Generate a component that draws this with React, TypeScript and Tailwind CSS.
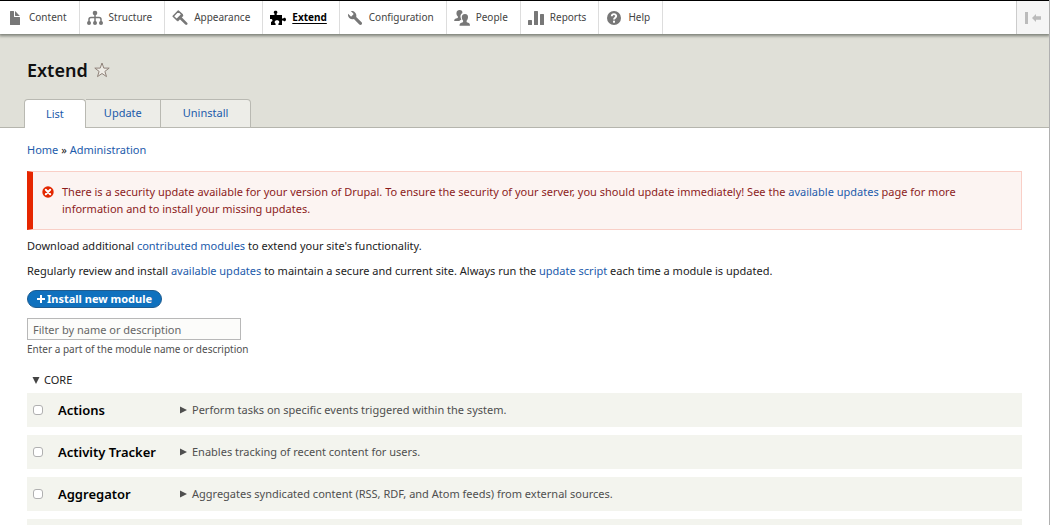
import React, { useState } from 'react';
import clsx from 'clsx';

type IconProps = { children: React.ReactNode };

const Glyph: React.FC<IconProps> = ({ children }) => (
  <svg viewBox="0 0 16 16" className="h-4 w-4 shrink-0" fill="currentColor" aria-hidden="true">
    {children}
  </svg>
);

const ContentIcon = () => (
  <Glyph>
    <path d="M12.5 7h-5a.5.5 0 0 1-.5-.5v-5a.5.5 0 0 0-.5-.5h-3a.5.5 0 0 0-.5.5v13a.5.5 0 0 0 .5.5h9a.5.5 0 0 0 .5-.5v-7a.5.5 0 0 0-.5-.5zM8.5 6h4c.3 0 .35-.15.15-.35l-4.3-4.3C8.15 1.15 8 1.2 8 1.5v4c0 .3.2.5.5.5z" />
  </Glyph>
);

const StructureIcon = () => (
  <Glyph>
    <circle cx="8" cy="3" r="2.3" />
    <path d="M8 4.500V13M2 12.500V9.500Q2 7.500 4 7.500h8q2 0 2 2v3" fill="none" stroke="currentColor" strokeWidth="1.500" />
    <circle cx="2" cy="13" r="2" />
    <circle cx="8" cy="13" r="2" />
    <circle cx="14" cy="13" r="2" />
  </Glyph>
);

const AppearanceIcon = () => (
  <Glyph>
    <path d="M6.300 1 1.200 6.200l3.600 3.600 5.400-5.200z" fill="none" stroke="currentColor" strokeWidth="1.500" strokeLinejoin="round" />
    <path d="M9.500 3.800 11.500 5.800 5.900 11.400 3.900 9.400z" />
    <path d="M9 8.500l5.200 5.200" stroke="currentColor" strokeWidth="2.600" strokeLinecap="round" />
  </Glyph>
);

const ExtendIcon = () => (
  <Glyph>
    <path d="M0 5h4.500V3.500C3.400 3 3.500 .7 5.600 .7s2.200 2.300 1.100 2.800V5H12v3.500h1.200c.4-1.200 2.800-1.200 2.800 1s-2.400 2.200-2.800 1H12V15H8.400v-1.500c1.500-.7 1.200-3.300-1.400-3.300s-2.900 2.600-1.400 3.300V15H1v-3.200c1.700.2 2.200-2.800 0-2.800H0z" />
  </Glyph>
);

const ConfigurationIcon = () => (
  <Glyph>
    <path d="M14.600 12.300 9.200 7.100c.5-1.600.1-3.400-1.200-4.700C6.900 1.200 5.200.8 3.800 1.100l2.500 2.500c.3.300.3.700 0 1L4.600 6.300c-.3.300-.7.300-1 0L1.100 3.800C.8 5.300 1.200 6.900 2.300 8c1.300 1.200 3 1.600 4.600 1.100l5.400 5.500c.6.600 1.600.6 2.300 0 .600-.7.600-1.700 0-2.300z" />
  </Glyph>
);

const PeopleIcon = () => (
  <Glyph>
    <path d="M5.500 0C7.700 0 8.600 1.200 8.400 3c-1.500.8-2.100 2.300-1.900 4 .1 1 .4 1.800.9 2.500-.8.400-1.700.9-2.200 1.500H.2c-.2-1.700.8-2.500 3.500-3 .4-.6.300-1.200 0-1.700-1.100-.9-1.400-2.300-1.200-3.500C2.700 1 3.700 0 5.500 0z" />
    <path d="M11 4c2.200 0 3.200 1.300 3 3.400-.1 1.300-.5 2.400-1.300 3.200-.2.600-.2 1.200.1 1.700 2.200.4 3.200 1.400 3.200 3.400H5.500c0-2 1.200-3 3.400-3.400.3-.5.300-1.100.1-1.700-.8-.8-1.200-1.900-1.200-3.200C7.700 5.300 8.800 4 11 4z" />
  </Glyph>
);

const ReportsIcon = () => (
  <Glyph>
    <rect x="0" y="10" width="4" height="5" rx=".5" />
    <rect x="6" y="1" width="4" height="14" rx=".5" />
    <rect x="12" y="4" width="4" height="11" rx=".5" />
  </Glyph>
);

const HelpIcon = () => (
  <Glyph>
    <circle cx="8" cy="8" r="7" />
    <path d="M5.800 6.200C5.800 3.500 10.200 3.500 10.200 6.100 10.200 7.700 8 7.700 8 9.600" fill="none" stroke="white" strokeWidth="1.900" />
    <rect x="7" y="10.700" width="2" height="2" fill="white" />
  </Glyph>
);

const toolbarItems = [
  { label: 'Content', icon: <ContentIcon /> },
  { label: 'Structure', icon: <StructureIcon /> },
  { label: 'Appearance', icon: <AppearanceIcon /> },
  { label: 'Extend', icon: <ExtendIcon />, active: true },
  { label: 'Configuration', icon: <ConfigurationIcon /> },
  { label: 'People', icon: <PeopleIcon /> },
  { label: 'Reports', icon: <ReportsIcon /> },
  { label: 'Help', icon: <HelpIcon /> },
];

const tabs = ['List', 'Update', 'Uninstall'];

const modules = [
  { name: 'Actions', description: 'Perform tasks on specific events triggered within the system.' },
  { name: 'Activity Tracker', description: 'Enables tracking of recent content for users.' },
  { name: 'Aggregator', description: 'Aggregates syndicated content (RSS, RDF, and Atom feeds) from external sources.' },
  { name: '', description: '' },
];

const TextLink: React.FC<{ children: React.ReactNode }> = ({ children }) => (
  <a href="#" className="text-[#1c5bab] hover:underline">{children}</a>
);

const Toolbar = () => (
  <nav
    aria-label="Administration"
    className="relative flex h-[34px] border-t border-black bg-white text-[10px] shadow-[0_1px_3px_1px_rgba(80,85,75,0.7)]"
  >
    {toolbarItems.map(({ label, icon, active }) => (
      <a
        key={label}
        href="#"
        className={clsx(
          'flex items-center gap-1.5 border-r border-[#dddddd] pr-3 pl-[7px]',
          active && 'font-bold'
        )}
      >
        <span className={active ? 'text-black' : 'text-[#777777]'}>{icon}</span>
        <span className={active ? 'text-black underline underline-offset-2' : 'text-[#444444]'}>{label}</span>
      </a>
    ))}
    <button
      type="button"
      aria-label="Vertical orientation"
      className="ml-auto flex w-[33px] items-center justify-center border-l border-[#cccccc] bg-[#f5f5f5] text-[#bbbbbb]"
    >
      <Glyph>
        <rect x="0" y="2" width="3" height="12" />
        <path d="M7 8l4-4v2.300h5v3.400h-5V12z" />
      </Glyph>
    </button>
  </nav>
);

const PageHeader = () => (
  <header className="border-b border-[#b5b5ad] bg-[#e0e0d8] px-6 pt-6">
    <div className="flex items-center gap-1.5 pl-[3px]">
      <h1 className="text-[18px] leading-6 font-semibold text-[#111111]">Extend</h1>
      <button type="button" aria-label="Add to shortcuts">
        <svg viewBox="0 0 16 16" className="h-4 w-4" fill="#eeece6" stroke="#8f8279" strokeWidth="1" strokeLinejoin="round">
          <path d="M8 1l1.800 5.100h5.400l-4.300 3.300 1.600 5.200L8 11.500l-4.500 3.100 1.600-5.200L.8 6.100h5.400z" />
        </svg>
      </button>
    </div>
    <nav aria-label="Tabs" className="mt-[17px] -mb-px flex text-[11px]">
      {tabs.map((tab, i) => (
        <a
          key={tab}
          href="#"
          className={clsx(
            'flex h-[29px] items-center border-t border-r border-[#b9b9b2] text-[#1c5bab]',
            i === 0 && 'rounded-t border-l bg-white px-[21px]',
            i === 1 && 'border-b bg-[#ededE8] px-[18px]',
            i === 2 && 'rounded-tr border-b bg-[#ededE8] px-[22px]'
          )}
        >
          {tab}
        </a>
      ))}
    </nav>
  </header>
);

const ErrorMessage = () => (
  <div
    role="alert"
    className="mt-3 flex gap-2 border border-l-[6px] border-[#f9cfc7] border-l-[#e62600] bg-[#fcf4f2] pt-[11px] pr-10 pb-3 pl-[9px] leading-[17px] text-[#8c1c1c]"
  >
    <svg viewBox="0 0 12 12" className="mt-[3px] h-3 w-3 shrink-0" aria-hidden="true">
      <circle cx="6" cy="6" r="5.700" fill="#e32700" />
      <path d="M3.800 3.800l4.400 4.400M8.200 3.800l-4.400 4.400" stroke="white" strokeWidth="2" strokeLinecap="round" />
    </svg>
    <p>
      There is a security update available for your version of Drupal. To ensure the security of your server, you should
      update immediately! See the <TextLink>available updates</TextLink> page for more information and to install your
      missing updates.
    </p>
  </div>
);

const ModuleTable = () => (
  <table className="w-full border-separate border-spacing-0">
    <tbody>
      {modules.map(({ name, description }) => {
        const id = `module-${name.toLowerCase().replace(' ', '-')}`;
        return (
          <tr key={id} className="h-[42px] bg-[#f3f4ee]">
            <td className="w-[31px] border-b-8 border-white pl-[6px]">
              {name && (
                <input
                  id={id}
                  type="checkbox"
                  className="block h-[10px] w-[10px] appearance-none rounded-[3px] border border-[#b0b0b0] bg-white checked:bg-[#0074bd]"
                />
              )}
            </td>
            <td className="w-[122px] border-b-8 border-white">
              <label htmlFor={id} className="block text-[13px] leading-[18px] font-semibold whitespace-nowrap text-black">
                {name}
              </label>
            </td>
            <td className="border-b-8 border-white text-[#4f4f4f]">
              {description && (
                <button type="button" className="flex items-center gap-[5px]">
                  <svg viewBox="0 0 7 8" className="h-2 w-[7px]" fill="#4f4f4f" aria-hidden="true">
                    <path d="M0 0.500L7 4L0 7.500z" />
                  </svg>
                  {description}
                </button>
              )}
            </td>
          </tr>
        );
      })}
    </tbody>
  </table>
);

const App: React.FC = () => {
  const [filter, setFilter] = useState('');
  const [coreOpen, setCoreOpen] = useState(true);

  return (
    <div className="h-screen overflow-hidden border-r border-[#b0b0b0] bg-white font-['Noto_Sans',sans-serif] text-[11px] text-[#222222]">
      <Toolbar />
      <PageHeader />
      <main className="px-[27px] pt-[13px]">
        <nav aria-label="Breadcrumb" className="leading-[18px]">
          <TextLink>Home</TextLink> » <TextLink>Administration</TextLink>
        </nav>
        <ErrorMessage />
        <p className="mt-[7px] leading-[18px]">
          Download additional <TextLink>contributed modules</TextLink> to extend your site's functionality.
        </p>
        <p className="mt-[7px] leading-[18px]">
          Regularly review and install <TextLink>available updates</TextLink> to maintain a secure and current site. Always
          run the <TextLink>update script</TextLink> each time a module is updated.
        </p>
        <a
          href="#"
          className="mt-[10px] flex h-[18px] w-fit items-center gap-0.5 rounded-full border border-[#1e5c90] bg-[#0f71be] px-[9px] font-bold text-white"
        >
          <svg viewBox="0 0 8 8" className="h-2 w-2" stroke="white" strokeWidth="2" aria-hidden="true">
            <path d="M4 0v8M0 4h8" />
          </svg>
          Install new module
        </a>
        <input
          type="text"
          value={filter}
          onChange={(e) => setFilter(e.target.value)}
          placeholder="Filter by name or description"
          aria-label="Filter by name or description"
          aria-describedby="filter-help"
          className="mt-[10px] block h-[22px] w-[214px] border border-[#b8b8b8] bg-[#fcfcfa] px-[5px] text-[11px] placeholder:text-[#666666]"
        />
        <p id="filter-help" className="text-[10px] leading-[18px] text-[#4f4f4f]">
          Enter a part of the module name or description
        </p>
        <button
          type="button"
          aria-expanded={coreOpen}
          onClick={() => setCoreOpen(!coreOpen)}
          className="mt-[13px] mb-1 flex items-center gap-1 pl-[5px] leading-[18px]"
        >
          <svg viewBox="0 0 8 7" className="h-[7px] w-2" fill="#444444" aria-hidden="true">
            <path d="M0.500 0L7.500 0L4 7z" />
          </svg>
          CORE
        </button>
        {coreOpen && <ModuleTable />}
      </main>
    </div>
  );
};

export default App;
